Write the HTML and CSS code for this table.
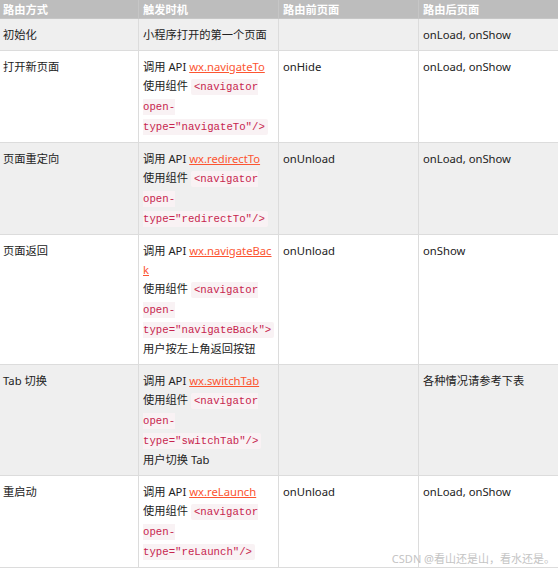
FILE: index.html
```html
<!DOCTYPE html>
<html lang="zh-CN">
<head>
  <meta charset="UTF-8">
  <meta name="viewport" content="width=device-width, initial-scale=1">
  <title>页面路由</title>
  <link rel="stylesheet" href="styles.css">
</head>
<body>
  <div class="page">
    <table class="route-table">
      <colgroup>
        <col class="c1"><col class="c2"><col class="c3"><col class="c4">
      </colgroup>
      <thead>
        <tr>
          <th>路由方式</th>
          <th>触发时机</th>
          <th>路由前页面</th>
          <th>路由后页面</th>
        </tr>
      </thead>
      <tbody>
        <tr>
          <td>初始化</td>
          <td>小程序打开的第一个页面</td>
          <td></td>
          <td>onLoad, onShow</td>
        </tr>
        <tr>
          <td>打开新页面</td>
          <td>调用 API <a href="#">wx.navigateTo</a><br>使用组件 <code>&lt;navigator open-type="navigateTo"/&gt;</code></td>
          <td>onHide</td>
          <td>onLoad, onShow</td>
        </tr>
        <tr>
          <td>页面重定向</td>
          <td>调用 API <a href="#">wx.redirectTo</a><br>使用组件 <code>&lt;navigator open-type="redirectTo"/&gt;</code></td>
          <td>onUnload</td>
          <td>onLoad, onShow</td>
        </tr>
        <tr>
          <td>页面返回</td>
          <td>调用 API <a href="#">wx.navigateBack</a><br>使用组件 <code>&lt;navigator open-type="navigateBack"&gt;</code><br>用户按左上角返回按钮</td>
          <td>onUnload</td>
          <td>onShow</td>
        </tr>
        <tr>
          <td>Tab 切换</td>
          <td>调用 API <a href="#">wx.switchTab</a><br>使用组件 <code>&lt;navigator open-type="switchTab"/&gt;</code><br>用户切换 Tab</td>
          <td></td>
          <td>各种情况请参考下表</td>
        </tr>
        <tr>
          <td>重启动</td>
          <td>调用 API <a href="#">wx.reLaunch</a><br>使用组件 <code>&lt;navigator open-type="reLaunch"/&gt;</code></td>
          <td>onUnload</td>
          <td>onLoad, onShow</td>
        </tr>
      </tbody>
    </table>
    <div class="watermark">CSDN @看山还是山，看水还是。</div>
  </div>
</body>
</html>
```

FILE: styles.css
```css
* { margin: 0; padding: 0; box-sizing: border-box; }
html, body {
  background: #fff;
  font-family: "Noto Sans", "Noto Sans CJK SC", sans-serif;
  color: #222;
}
.page {
  position: relative;
  height: 569px;
  overflow: hidden;
}
.route-table {
  border-collapse: collapse;
  table-layout: fixed;
  width: 561px;
  margin-left: -2px;
  font-size: 11.25px;
  line-height: 19px;
}
.c1 { width: 140px; }
.c2 { width: 140px; }
.c3 { width: 140px; }
.c4 { width: 141px; }
th {
  background: #bdbdbd;
  color: #fff;
  font-weight: bold;
  text-align: left;
  padding: 1px 4px 0;
  line-height: 17px;
  border: 1px solid #c6c6c6;
  border-top: none;
}
td {
  padding: 6px 4px 6px;
  border: 1px solid #dcdcdc;
  vertical-align: top;
  word-break: break-all;
}
tbody tr:nth-child(odd) td { background: #efefef; }
a {
  color: #fc5531;
  text-decoration: underline;
}
code {
  font-family: "Liberation Mono", "DejaVu Sans Mono", monospace;
  font-size: 10.7px;
  line-height: 18px;
  color: #c7254e;
  background: #f9f2f4;
  padding: 2px 3px;
  border-radius: 2px;
  word-break: normal;
}
.watermark {
  position: absolute;
  right: 3px;
  bottom: 3px;
  font-size: 11px;
  color: #c4c4c4;
  white-space: nowrap;
}
```
